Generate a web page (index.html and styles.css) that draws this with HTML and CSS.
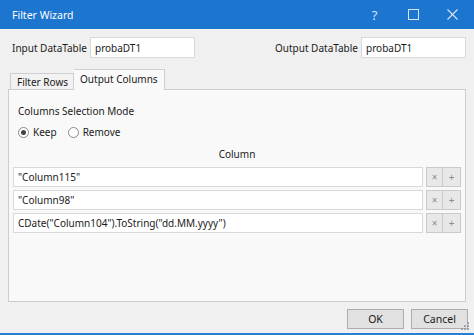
FILE: index.html
```html
<!DOCTYPE html>
<html lang="en">
<head>
    <meta charset="UTF-8">
    <meta name="viewport" content="width=device-width, initial-scale=1.0">
    <title>Filter Wizard</title>
    <link rel="stylesheet" href="styles.css">
</head>
<body>
    <div class="window">
        <div class="titlebar">
            <span class="title">Filter Wizard</span>
            <div class="caption-buttons">
                <span class="caption-btn help">?</span>
                <span class="caption-btn">
                    <svg width="11" height="11" viewBox="0 0 11 11"><rect x="0.5" y="0.5" width="10" height="10" fill="none" stroke="currentColor" stroke-width="1"/></svg>
                </span>
                <span class="caption-btn">
                    <svg width="11" height="11" viewBox="0 0 11 11"><path d="M0.5 0.5 L10.5 10.5 M10.5 0.5 L0.5 10.5" stroke="currentColor" stroke-width="1.1"/></svg>
                </span>
            </div>
        </div>

        <div class="content">
            <div class="io-row">
                <div class="field">
                    <span class="field-label">Input DataTable</span>
                    <div class="textbox io-box">probaDT1</div>
                </div>
                <div class="field">
                    <span class="field-label">Output DataTable</span>
                    <div class="textbox io-box">probaDT1</div>
                </div>
            </div>

            <div class="tabs">
                <div class="tab">Filter Rows</div>
                <div class="tab active">Output Columns</div>
            </div>

            <div class="panel">
                <div class="mode-label">Columns Selection Mode</div>
                <div class="radios">
                    <span class="radio checked"></span><span class="radio-text">Keep</span>
                    <span class="radio"></span><span class="radio-text">Remove</span>
                </div>
                <div class="col-header">Column</div>
                <div class="rows">
                    <div class="row">
                        <div class="textbox cell">"Column115"</div>
                        <div class="row-buttons"><span class="mini-btn">&#215;</span><span class="mini-btn">+</span></div>
                    </div>
                    <div class="row">
                        <div class="textbox cell">"Column98"</div>
                        <div class="row-buttons"><span class="mini-btn">&#215;</span><span class="mini-btn">+</span></div>
                    </div>
                    <div class="row">
                        <div class="textbox cell">CDate("Column104").ToString("dd.MM.yyyy")</div>
                        <div class="row-buttons"><span class="mini-btn">&#215;</span><span class="mini-btn">+</span></div>
                    </div>
                </div>
            </div>

            <div class="footer">
                <button class="dlg-btn">OK</button>
                <button class="dlg-btn">Cancel</button>
                <svg class="grip" width="8" height="8" viewBox="0 0 8 8">
                    <rect x="6" y="0" width="2" height="2" fill="#9aa3ad"/>
                    <rect x="3" y="3" width="2" height="2" fill="#9aa3ad"/>
                    <rect x="6" y="3" width="2" height="2" fill="#9aa3ad"/>
                    <rect x="0" y="6" width="2" height="2" fill="#9aa3ad"/>
                    <rect x="3" y="6" width="2" height="2" fill="#9aa3ad"/>
                    <rect x="6" y="6" width="2" height="2" fill="#9aa3ad"/>
                </svg>
            </div>
        </div>
        <div class="bottom-edge"></div>
    </div>
</body>
</html>
```

FILE: styles.css
```css
body {
    margin: 0;
    font-family: "Noto Sans", "Open Sans", sans-serif;
    font-size: 10px;
    color: #1a1a1a;
    background: #f0f0f0;
}
.window {
    width: 474px;
    height: 335px;
    display: flex;
    flex-direction: column;
    background: #f0f0f0;
}
.titlebar {
    height: 29px;
    background: #1c75cf;
    color: #fff;
    display: flex;
    align-items: center;
    justify-content: space-between;
    flex-shrink: 0;
}
.title {
    padding-left: 12px;
    font-size: 10.5px;
}
.caption-buttons {
    display: flex;
    padding-right: 2px;
}
.caption-btn {
    width: 39px;
    height: 29px;
    display: flex;
    align-items: center;
    justify-content: center;
    color: #d6e6f7;
}
.help {
    font-size: 13px;
}
.content {
    flex: 1;
    display: flex;
    flex-direction: column;
    padding: 8px 8px 0 8px;
}
.io-row {
    display: flex;
    justify-content: space-between;
    padding-left: 4px;
}
.field {
    display: flex;
    align-items: center;
    gap: 3px;
}
.textbox {
    background: #fff;
    border: 1px solid #d9d9d9;
    box-sizing: border-box;
    display: flex;
    align-items: center;
    padding-left: 4px;
    white-space: nowrap;
}
.io-box {
    width: 105px;
    height: 21px;
}
.tabs {
    display: flex;
    align-items: flex-end;
    height: 20px;
    margin-top: 11px;
    padding-left: 2px;
    position: relative;
    z-index: 1;
}
.tab {
    height: 16px;
    box-sizing: border-box;
    border: 1px solid #cfcfcf;
    border-bottom: none;
    background: #f2f2f2;
    padding: 0 5px 0 6px;
    display: flex;
    align-items: center;
}
.tab.active {
    height: 21px;
    margin-bottom: -1px;
    background: #f9f9f9;
    border-left: none;
    padding: 0 6px 2px 6px;
}
.panel {
    height: 213px;
    box-sizing: border-box;
    border: 1px solid #cdcdcd;
    background: #f9f9f9;
    padding: 13px 4px 0 4px;
    display: flex;
    flex-direction: column;
}
.mode-label {
    padding-left: 5px;
    height: 16px;
    line-height: 16px;
}
.radios {
    display: flex;
    align-items: center;
    margin-top: 5px;
    padding-left: 5px;
    height: 16px;
}
.radio {
    width: 9px;
    height: 9px;
    border: 1px solid #8a8a8a;
    border-radius: 50%;
    background: #fff;
    position: relative;
    margin-right: 4px;
}
.radio.checked::after {
    content: "";
    position: absolute;
    left: 2px;
    top: 2px;
    width: 5px;
    height: 5px;
    border-radius: 50%;
    background: #444;
}
.radio-text {
    margin-right: 11px;
}
.col-header {
    text-align: center;
    margin-top: 6px;
    height: 16px;
    line-height: 16px;
}
.rows {
    display: flex;
    flex-direction: column;
    gap: 3px;
    margin-top: 5px;
}
.row {
    display: flex;
    align-items: center;
    gap: 3px;
}
.cell {
    flex: 1;
    height: 20px;
}
.row-buttons {
    display: flex;
}
.mini-btn {
    width: 18px;
    height: 20px;
    box-sizing: border-box;
    border: 1px solid #cacaca;
    background: #e8e8e8;
    color: #8c8c8c;
    display: flex;
    align-items: center;
    justify-content: center;
    font-size: 10px;
}
.mini-btn:first-child {
    width: 17px;
}
.mini-btn + .mini-btn {
    border-left: none;
}
.footer {
    display: flex;
    justify-content: flex-end;
    align-items: flex-start;
    gap: 7px;
    padding-top: 7px;
    margin-right: -2px;
    position: relative;
}
.dlg-btn {
    width: 57px;
    height: 20px;
    font-family: inherit;
    font-size: 10.5px;
    color: #1a1a1a;
    background: #e1e1e1;
    border: 1px solid #adadad;
    padding: 0;
}
.grip {
    position: absolute;
    right: -1px;
    top: 20px;
}
.bottom-edge {
    height: 2px;
    background: #2a7fd4;
    flex-shrink: 0;
}
```
